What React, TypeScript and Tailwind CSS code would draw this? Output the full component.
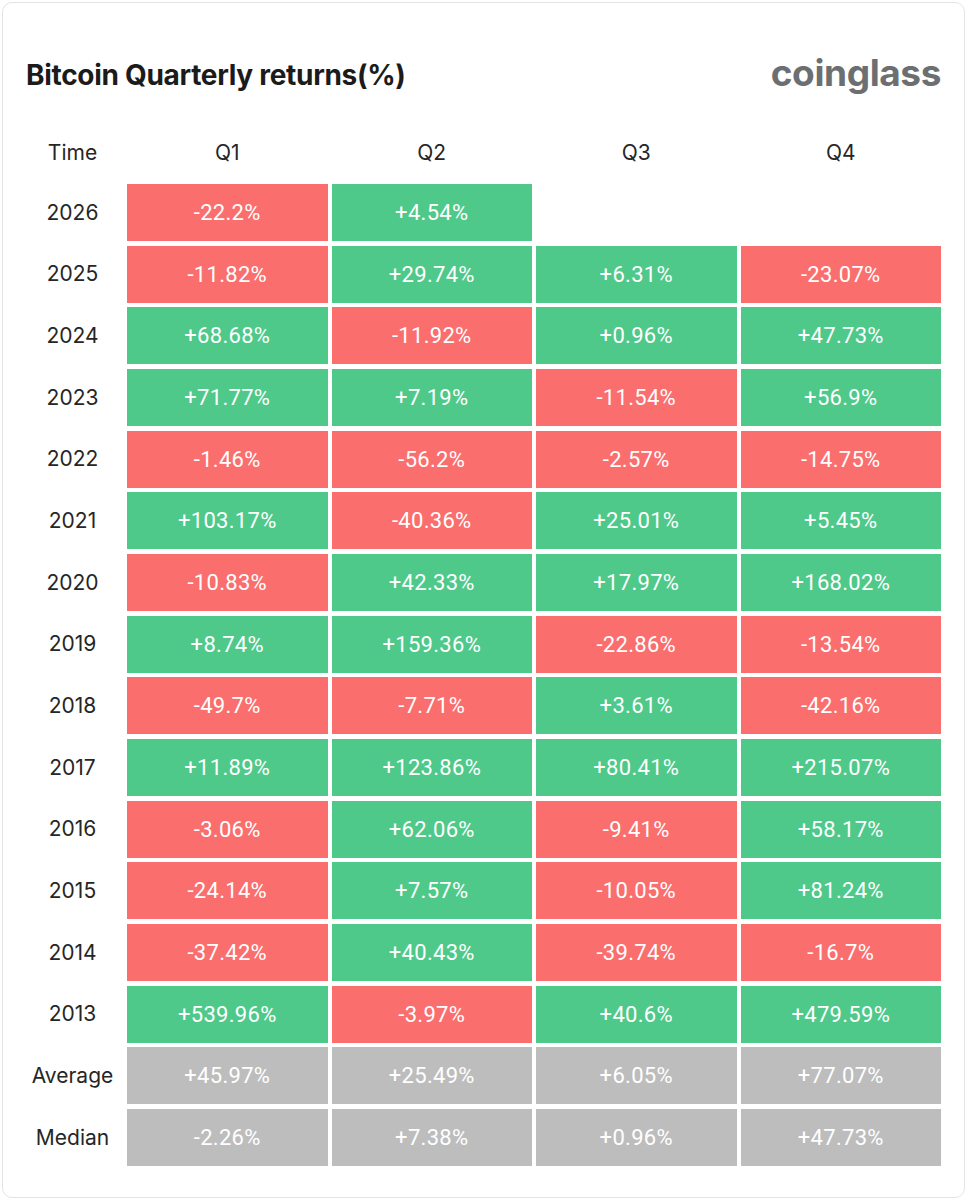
import React from "react";

type Cell = string | null;
const rows: { label: string; cells: Cell[]; gray?: boolean }[] = [
  { label: "2026", cells: ["-22.2%", "+4.54%", null, null] },
  { label: "2025", cells: ["-11.82%", "+29.74%", "+6.31%", "-23.07%"] },
  { label: "2024", cells: ["+68.68%", "-11.92%", "+0.96%", "+47.73%"] },
  { label: "2023", cells: ["+71.77%", "+7.19%", "-11.54%", "+56.9%"] },
  { label: "2022", cells: ["-1.46%", "-56.2%", "-2.57%", "-14.75%"] },
  { label: "2021", cells: ["+103.17%", "-40.36%", "+25.01%", "+5.45%"] },
  { label: "2020", cells: ["-10.83%", "+42.33%", "+17.97%", "+168.02%"] },
  { label: "2019", cells: ["+8.74%", "+159.36%", "-22.86%", "-13.54%"] },
  { label: "2018", cells: ["-49.7%", "-7.71%", "+3.61%", "-42.16%"] },
  { label: "2017", cells: ["+11.89%", "+123.86%", "+80.41%", "+215.07%"] },
  { label: "2016", cells: ["-3.06%", "+62.06%", "-9.41%", "+58.17%"] },
  { label: "2015", cells: ["-24.14%", "+7.57%", "-10.05%", "+81.24%"] },
  { label: "2014", cells: ["-37.42%", "+40.43%", "-39.74%", "-16.7%"] },
  { label: "2013", cells: ["+539.96%", "-3.97%", "+40.6%", "+479.59%"] },
  { label: "Average", cells: ["+45.97%", "+25.49%", "+6.05%", "+77.07%"], gray: true },
  { label: "Median", cells: ["-2.26%", "+7.38%", "+0.96%", "+47.73%"], gray: true },
];

const labelFont = { fontFamily: "Inter, 'Noto Sans', sans-serif" };
const numFont = { fontFamily: "Roboto, 'Liberation Sans', sans-serif" };

export default function App() {
  return (
    <div className="w-[967px] h-[1200px] bg-white p-[2px]">
      <div className="h-full rounded-[10px] border border-[#e4e4e4] bg-white pl-[19px] pr-[23px] pt-[42px]">
        <div className="flex h-[60px] items-center justify-between">
          <div
            className="ml-[4px] text-[28px] font-bold text-[#1b1b1b] tracking-[-0.3px]"
            style={labelFont}
          >
            Bitcoin Quarterly returns(%)
          </div>
          <div
            className="text-[37px] font-bold leading-none text-[#6c6f72] tracking-[-0.4px] -mt-[6px]"
            style={labelFont}
          >
            coinglass
          </div>
        </div>
        <div
          className="mt-[23px] grid h-[50px] grid-cols-[101px_repeat(4,1fr)] gap-x-1 items-center text-[21px] text-[#262626]"
          style={labelFont}
        >
          <div className="text-center">Time</div>
          <div className="text-center">Q1</div>
          <div className="text-center">Q2</div>
          <div className="text-center">Q3</div>
          <div className="text-center">Q4</div>
        </div>
        <div className="mt-[6px] grid grid-cols-[101px_repeat(4,1fr)] gap-x-1 gap-y-[4.67px] auto-rows-[57px]">
          {rows.map((r) => (
            <React.Fragment key={r.label}>
              <div
                className="flex items-center justify-center text-[21px] text-[#262626]"
                style={labelFont}
              >
                {r.label}
              </div>
              {r.cells.map((c, i) => {
                if (c === null) return <div key={i} />;
                const bg = r.gray
                  ? "bg-[#bdbdbd]"
                  : c.startsWith("-")
                  ? "bg-[#fa6e6e]"
                  : "bg-[#4ec98a]";
                return (
                  <div
                    key={i}
                    className={`${bg} flex items-center justify-center text-[22px] text-white tracking-[0.3px]`}
                    style={numFont}
                  >
                    {c}
                  </div>
                );
              })}
            </React.Fragment>
          ))}
        </div>
      </div>
    </div>
  );
}
